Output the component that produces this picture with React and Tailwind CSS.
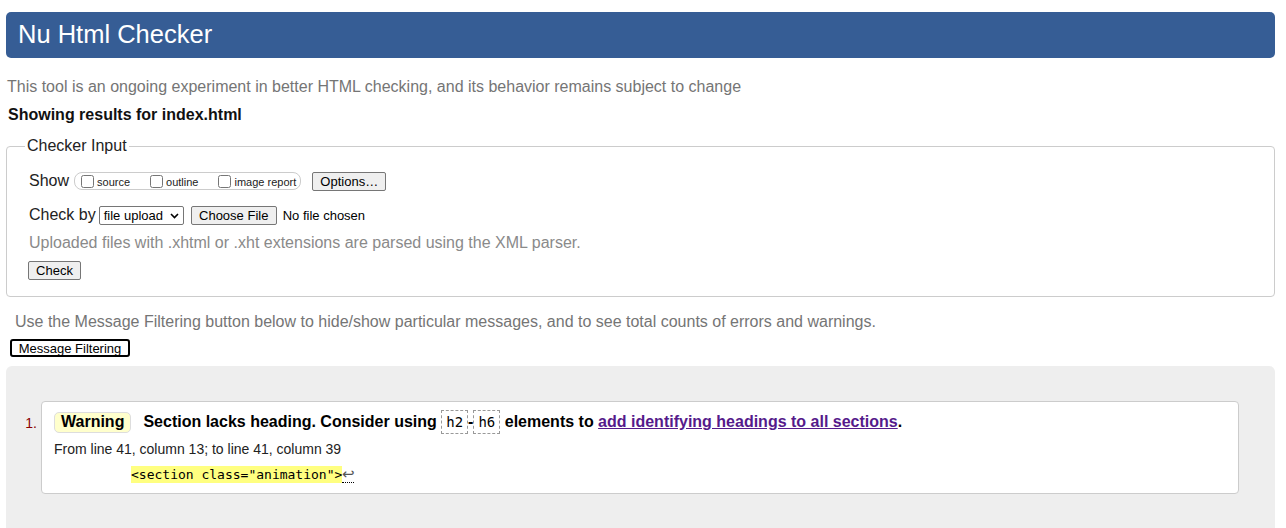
export default function App() {
  return (
    <div className="w-[1286px] h-[528px] overflow-hidden bg-white font-['Liberation_Sans',Arial,sans-serif]">
      <div className="pt-3 pl-[6px]">
        <div className="w-[1269px] h-[46px] bg-[#365d95] rounded-[5px] flex items-center pl-3">
          <h1 className="text-white text-[25.5px] leading-none">Nu Html Checker</h1>
        </div>
      </div>

      <p className="mt-[19px] pl-[7px] text-[16px] leading-[19px] text-[#757575]">
        This tool is an ongoing experiment in better HTML checking, and its behavior remains subject to change
      </p>
      <p className="mt-[10px] pl-[8px] text-[16px] leading-[18px] font-bold text-[#111]">
        Showing results for index.html
      </p>

      <fieldset className="mt-[12px] ml-[6px] w-[1269px] border border-[#cccccc] rounded-[4px] pl-[22px] pb-[14px]">
        <legend className="-ml-[4px] px-[2px] text-[16px] leading-[20px] text-[#222]">Checker Input</legend>

        <div className="mt-[15px] h-[20px] flex items-center">
          <span className="text-[16px] leading-[20px] text-[#222]">Show</span>
          <div className="ml-[5px] h-[18px] flex items-center border border-[#cccccc] rounded-[8px] pl-[6px] pr-[4px] gap-[20px]">
            <label className="flex items-center">
              <input type="checkbox" className="m-0 w-[13px] h-[13px]" />
              <span className="ml-[3px] text-[11px] leading-[13px] mt-[3px] text-[#222]">source</span>
            </label>
            <label className="flex items-center">
              <input type="checkbox" className="m-0 w-[13px] h-[13px]" />
              <span className="ml-[3px] text-[11px] leading-[13px] mt-[3px] text-[#222]">outline</span>
            </label>
            <label className="flex items-center">
              <input type="checkbox" className="m-0 w-[13px] h-[13px]" />
              <span className="ml-[3px] text-[11px] leading-[13px] mt-[3px] text-[#222]">image report</span>
            </label>
          </div>
          <button className="ml-[11px] h-[19px] w-[74px] bg-[#efefef] border border-[#767676] rounded-[2px] text-[13px] leading-none text-black">
            Options…
          </button>
        </div>

        <div className="mt-[14px] h-[20px] flex items-center">
          <span className="text-[16px] leading-[20px] text-[#222]">Check by</span>
          <div className="ml-[3px] h-[19px] w-[85px] flex items-center justify-between border border-[#767676] rounded-[2px] bg-white pl-[4px] pr-[4px]">
            <span className="text-[13px] leading-none text-black">file upload</span>
            <svg width="9" height="6" viewBox="0 0 9 6" className="mt-[1px]">
              <path d="M1 1 L4.5 4.5 L8 1" fill="none" stroke="#000" strokeWidth="1.6" />
            </svg>
          </div>
          <button className="ml-[7px] h-[19px] w-[86px] bg-[#efefef] border border-[#767676] rounded-[2px] text-[13px] leading-none text-black">
            Choose File
          </button>
          <span className="ml-[6px] text-[13px] leading-none text-black">No file chosen</span>
        </div>

        <p className="mt-[8px] text-[16px] leading-[19px] text-[#8a8a8a]">
          Uploaded files with .xhtml or .xht extensions are parsed using the XML parser.
        </p>

        <button className="mt-[9px] -ml-[1px] h-[19px] w-[53px] bg-[#efefef] border border-[#767676] rounded-[2px] text-[13px] leading-none text-black">
          Check
        </button>
      </fieldset>

      <p className="mt-[15px] pl-[15px] text-[16px] leading-[19px] text-[#757575]">
        Use the Message Filtering button below to hide/show particular messages, and to see total counts of errors and warnings.
      </p>
      <div className="pl-[10px] mt-[8px] flex">
        <button className="h-[18px] w-[120px] border-2 border-black rounded-[3px] bg-white text-[13px] leading-none text-black">
          Message Filtering
        </button>
      </div>

      <div className="mt-[9px] ml-[6px] w-[1269px] h-[200px] bg-[#eeeeee] rounded-[6px] pt-[35px]">
        <div className="grid grid-cols-[35px_1198px]">
          <div className="pt-[14px] pr-[4px] text-right text-[14px] leading-[16px] text-[#8b0000]">1.</div>
          <div className="h-[93px] bg-white border border-[#cccccc] rounded-[4px] pl-[12px] pt-[8px]">
            <div className="h-[24px] flex items-center text-[16px] font-bold text-black">
              <span className="h-[21px] flex items-center px-[6px] bg-[#ffffcc] border border-[#dddddd] rounded-[5px]">Warning</span>
              <span className="ml-[12px]">Section lacks heading. Consider using&nbsp;</span>
              <code className="h-[24px] flex items-center px-[4px] border border-dashed border-[#999] font-['DejaVu_Sans_Mono',monospace] font-normal text-[14px]">h2</code>
              <span>-</span>
              <code className="h-[24px] flex items-center px-[4px] border border-dashed border-[#999] font-['DejaVu_Sans_Mono',monospace] font-normal text-[14px]">h6</code>
              <span>&nbsp;elements to&nbsp;</span>
              <a className="text-[#551a8b] underline">add identifying headings to all sections</a>
              <span>.</span>
            </div>
            <p className="mt-[7px] text-[14px] leading-[16px] text-[#222]">
              From line 41, column 13; to line 41, column 39
            </p>
            <div className="mt-[9px] pl-[77px] flex items-start h-[17px] font-['DejaVu_Sans_Mono',monospace] text-[13px] leading-[17px]">
              <span className="bg-[#ffff80] text-black">&lt;section class="animation"&gt;</span>
              <span className="h-[17px] w-[12px] flex items-center justify-center border-b border-dotted border-black text-[#555] text-[15px] font-['DejaVu_Sans',sans-serif] leading-none">↩</span>
            </div>
          </div>
        </div>
      </div>
    </div>
  );
}
